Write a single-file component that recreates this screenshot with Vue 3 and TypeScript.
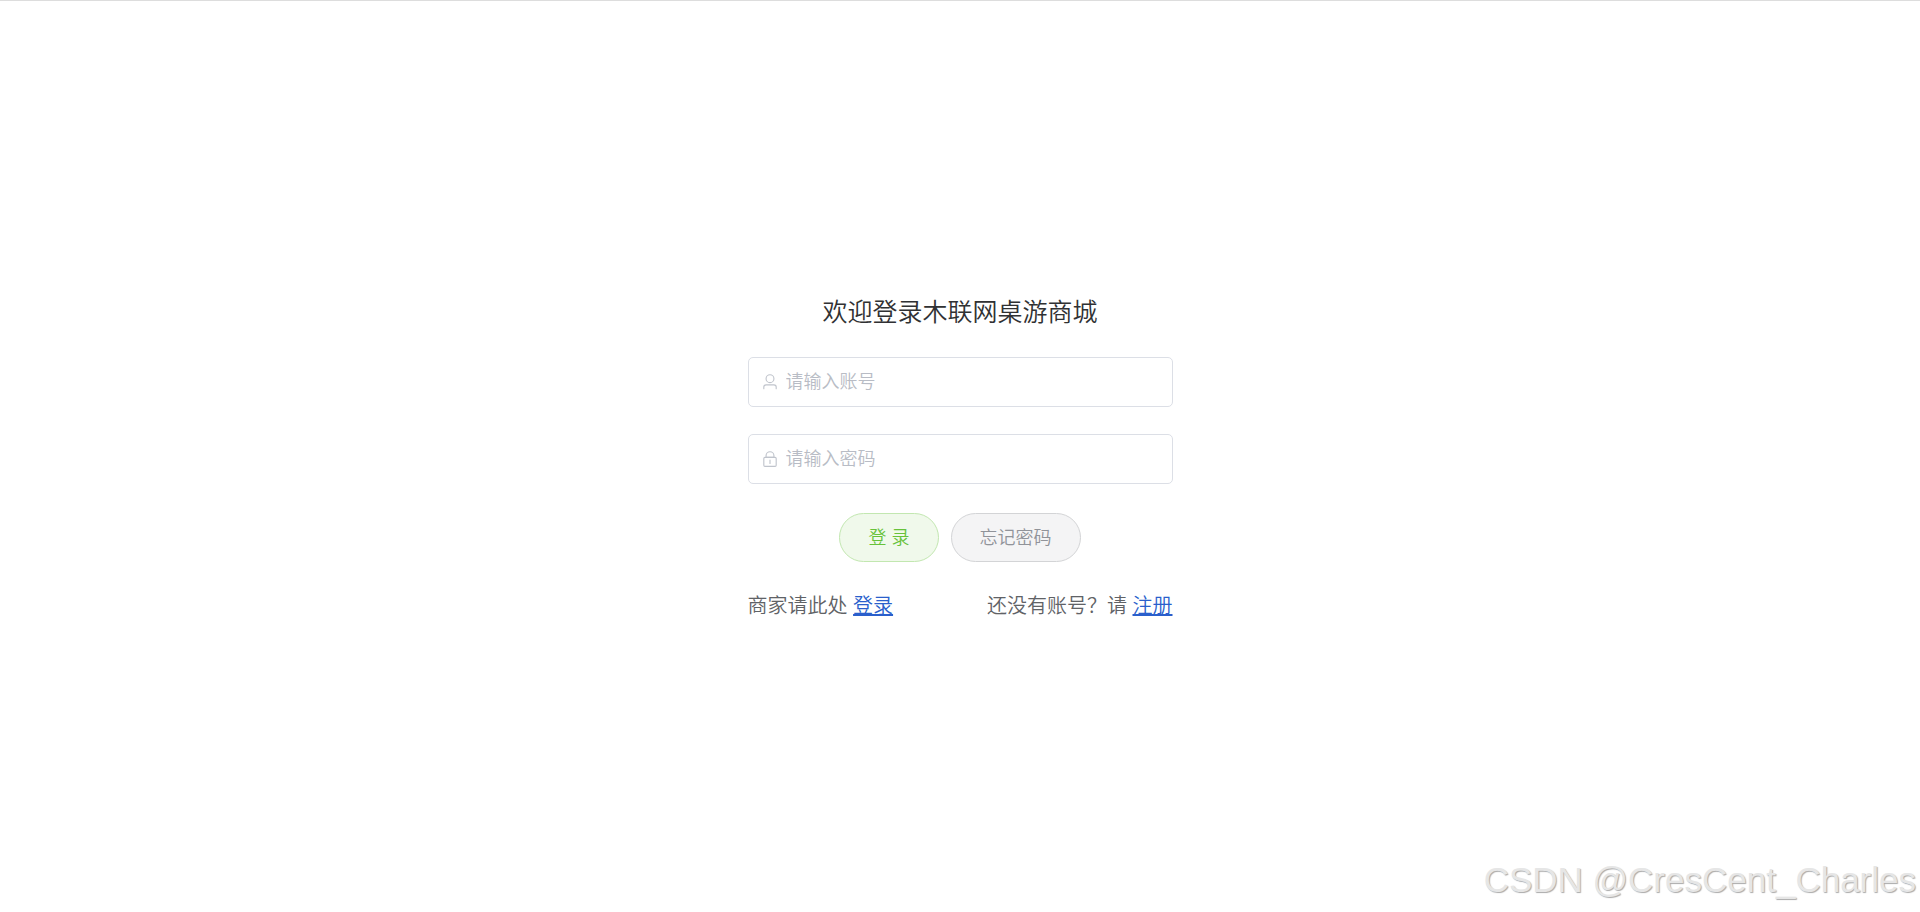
<script setup lang="ts">
import { ref } from 'vue'

const account = ref('')
const password = ref('')
</script>

<template>
  <main class="page">
    <form class="login" @submit.prevent>
      <h1 class="title">欢迎登录木联网桌游商城</h1>
      <label class="field">
        <svg class="icon" viewBox="0 0 1024 1024" aria-hidden="true">
          <path d="M512 512a192 192 0 1 0 0-384 192 192 0 0 0 0 384zm0 64a256 256 0 1 1 0-512 256 256 0 0 1 0 512zm320 320v-96a96 96 0 0 0-96-96H288a96 96 0 0 0-96 96v96a32 32 0 1 1-64 0v-96a160 160 0 0 1 160-160h448a160 160 0 0 1 160 160v96a32 32 0 1 1-64 0z" />
        </svg>
        <input v-model="account" class="input" type="text" placeholder="请输入账号" aria-label="请输入账号" />
      </label>
      <label class="field">
        <svg class="icon" viewBox="0 0 1024 1024" aria-hidden="true">
          <path d="M224 448a32 32 0 0 0-32 32v384a32 32 0 0 0 32 32h576a32 32 0 0 0 32-32V480a32 32 0 0 0-32-32H224zm0-64h576a96 96 0 0 1 96 96v384a96 96 0 0 1-96 96H224a96 96 0 0 1-96-96V480a96 96 0 0 1 96-96z" />
          <path d="M512 544a32 32 0 0 1 32 32v192a32 32 0 1 1-64 0V576a32 32 0 0 1 32-32zM704 384v-64a192 192 0 1 0-384 0v64h384zM512 64a256 256 0 0 1 256 256v128H256V320A256 256 0 0 1 512 64z" />
        </svg>
        <input v-model="password" class="input" type="password" placeholder="请输入密码" aria-label="请输入密码" />
      </label>
      <div class="actions">
        <button class="button success" type="submit">登 录</button>
        <button class="button info" type="button">忘记密码</button>
      </div>
      <div class="links">
        <span>商家请此处 <a href="#merchant">登录</a></span>
        <span>还没有账号？请 <a href="#register">注册</a></span>
      </div>
    </form>
    <div class="watermark">CSDN @CresCent_Charles</div>
  </main>
</template>

<style>
body {
  margin: 0;
}
</style>

<style scoped>
.page {
  box-sizing: border-box;
  position: relative;
  display: flex;
  justify-content: center;
  align-items: center;
  min-height: 100vh;
  border-top: 1px solid #ddd;
  background: #fff;
  color: #606266;
  font-family: "Liberation Sans", "Noto Sans CJK SC", sans-serif;
  font-weight: 350;
}

.login {
  display: flex;
  flex-direction: column;
  width: 425px;
}

.title {
  margin: 0 0 25px;
  color: #303133;
  font-size: 25px;
  font-weight: 350;
  line-height: 40px;
  text-align: center;
}

.field {
  box-sizing: border-box;
  display: flex;
  align-items: center;
  gap: 7px;
  height: 50px;
  margin-bottom: 27px;
  padding: 0 12px;
  border: 1px solid #dcdfe6;
  border-radius: 5px;
}

.icon {
  flex: none;
  width: 18px;
  height: 18px;
  fill: #c0c4cc;
}

.input {
  flex: 1;
  min-width: 0;
  height: 46px;
  padding: 0;
  border: 0;
  outline: 0;
  background: transparent;
  color: #606266;
  font-family: inherit;
  font-size: 18px;
  font-weight: inherit;
}

.input::placeholder {
  color: #b8bcc5;
  opacity: 1;
}

.actions {
  display: flex;
  justify-content: center;
  gap: 12px;
  margin-top: 2px;
}

.button {
  height: 49px;
  padding: 0 28px;
  border: 1px solid;
  border-radius: 25px;
  font-family: inherit;
  font-size: 18px;
  font-weight: inherit;
  line-height: 18px;
  cursor: pointer;
}

.success {
  border-color: #c2e7b0;
  background: #f0f9eb;
  color: #67c23a;
}

.info {
  border-color: #d3d4d6;
  background: #f4f4f5;
  color: #909399;
}

.links {
  display: flex;
  justify-content: space-between;
  margin-top: 29px;
  font-size: 20px;
  line-height: 30px;
}

.links a {
  color: #2a5fcc;
}

.watermark {
  position: absolute;
  right: 4px;
  bottom: 12px;
  color: #e6e6e6;
  font-size: 35px;
  font-weight: 400;
  line-height: 40px;
  text-shadow: 1px 1px 1px #aaa;
}
</style>
